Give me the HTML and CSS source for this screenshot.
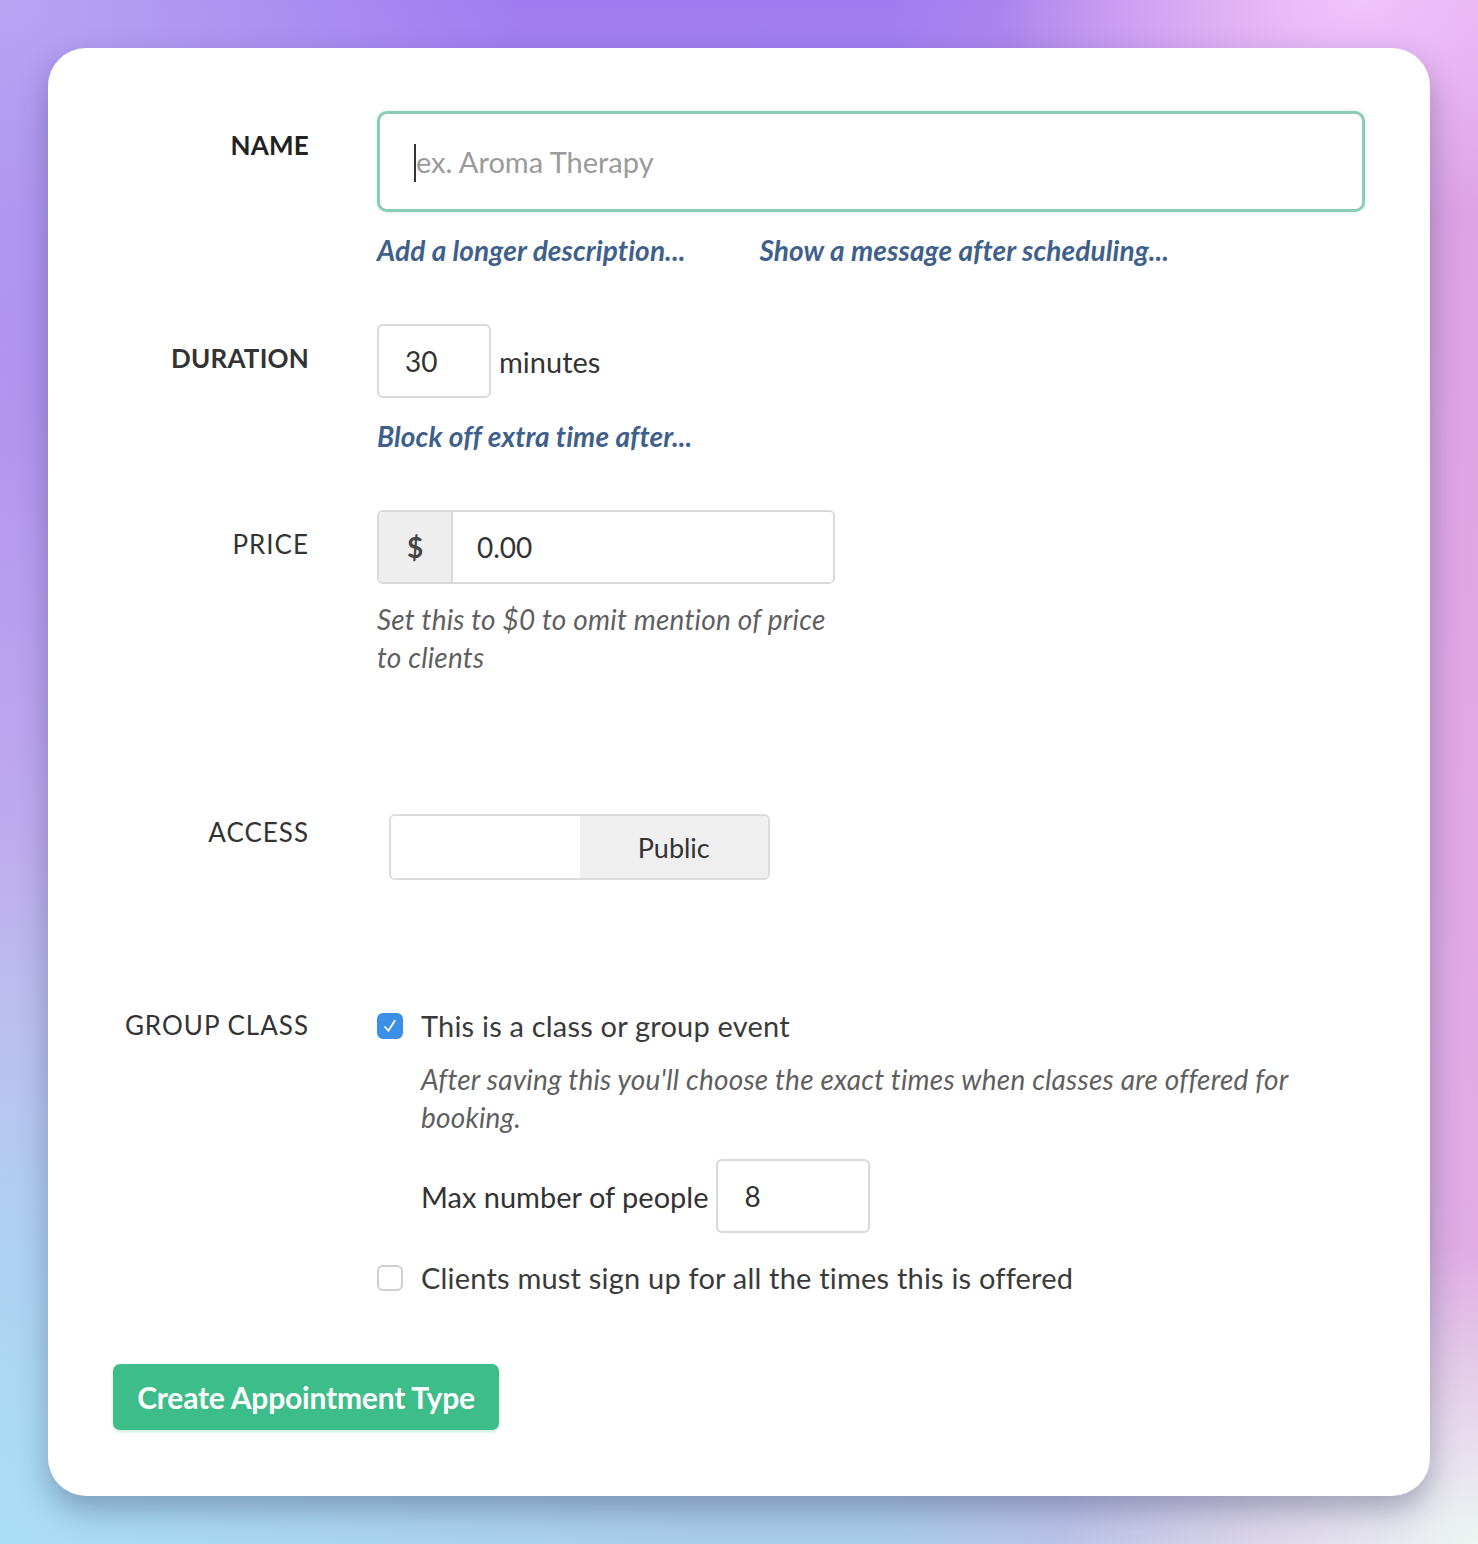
FILE: index.html
```html
<!DOCTYPE html>
<html lang="en">
<head>
<meta charset="utf-8">
<title>New Appointment Type</title>
<link rel="stylesheet" href="styles.css">
</head>
<body>
<div class="card">
  <div class="form">
    <div class="label label-strong">NAME</div>
    <div class="field">
      <div class="name-wrap">
        <input class="name-input" type="text" placeholder="ex. Aroma Therapy">
        <span class="caret"></span>
      </div>
      <div class="links">
        <a class="link" href="#">Add a longer description...</a>
        <a class="link" href="#">Show a message after scheduling...</a>
      </div>
    </div>

    <div class="label label-semi row-gap">DURATION</div>
    <div class="field row-gap">
      <div class="inline">
        <input class="box duration-input" type="text" value="30">
        <span class="unit">minutes</span>
      </div>
      <div class="links"><a class="link" href="#">Block off extra time after...</a></div>
    </div>

    <div class="label row-gap">PRICE</div>
    <div class="field row-gap">
      <div class="price-group">
        <span class="addon">$</span>
        <input class="price-input" type="text" value="0.00">
      </div>
      <p class="help help-price">Set this to $0 to omit mention of price to clients</p>
    </div>

    <div class="label row-gap-lg">ACCESS</div>
    <div class="field row-gap-lg access-field">
      <div class="toggle">
        <span class="toggle-off"></span>
        <span class="toggle-on">Public</span>
      </div>
    </div>

    <div class="label row-gap-xl">GROUP CLASS</div>
    <div class="field row-gap-xl group-field">
      <label class="check-line">
        <span class="check checked">
          <svg viewBox="0 0 16 16" width="20" height="20"><path d="M4 8.8 L6.7 11.8 L11.8 3.8" fill="none" stroke="#fff" stroke-width="1.4" stroke-linecap="round" stroke-linejoin="round"/></svg>
        </span>
        <span class="check-text">This is a class or group event</span>
      </label>
      <div class="indent">
        <p class="help help-group">After saving this you'll choose the exact times when classes are offered for booking.</p>
        <div class="inline max-line">
          <span class="max-label">Max number of people</span>
          <input class="box max-input" type="text" value="8">
        </div>
      </div>
      <label class="check-line check-line-2">
        <span class="check"></span>
        <span class="check-text">Clients must sign up for all the times this is offered</span>
      </label>
    </div>
  </div>
  <button class="submit" type="button">Create Appointment Type</button>
</div>
</body>
</html>
```
FILE: styles.css
```css
* { box-sizing: border-box; }

html, body {
  margin: 0;
  padding: 0;
}

body {
  width: 1478px;
  height: 1544px;
  padding: 48px;
  font-family: Lato, "Open Sans", "Liberation Sans", sans-serif;
  color: #3a3a3a;
  background:
    radial-gradient(ellipse 420px 300px at 100% 100%, rgba(236,246,242,1) 0%, rgba(236,246,242,0) 100%),
    radial-gradient(ellipse 700px 700px at 0% 100%, rgba(170,222,246,1) 0%, rgba(170,222,246,0) 100%),
    radial-gradient(ellipse 360px 220px at 92% 0%, rgba(240,196,252,1) 0%, rgba(240,196,252,0) 100%),
    radial-gradient(ellipse 520px 420px at 0% 0%, rgba(186,170,244,0.9) 0%, rgba(186,170,244,0) 100%),
    linear-gradient(to right, rgba(190,170,245,0) 60%, rgba(232,168,226,0.85) 100%),
    linear-gradient(to bottom, #a07cf0 0%, #b79cef 35%, #c2b4ee 65%, #aacde9 100%);
  overflow: hidden;
}

.card {
  width: 1382px;
  height: 1448px;
  background: #fff;
  border-radius: 38px;
  padding: 63px 65px 67px;
  box-shadow: 0 14px 30px rgba(40, 50, 90, 0.35);
}

.form {
  display: grid;
  grid-template-columns: 196px 988px;
  column-gap: 68px;
  align-items: start;
}

.label {
  text-align: right;
  font-size: 26px;
  line-height: 34px;
  padding-top: 17px;
  font-weight: 400;
  color: #333;
  letter-spacing: 1px;
}
.label-strong { font-weight: 700; color: #222; letter-spacing: 0.2px; }
.label-semi { font-weight: 700; color: #333; letter-spacing: 0.2px; }

.row-gap { margin-top: 57px; }
.row-gap-lg { margin-top: 122px; }
.row-gap-xl { margin-top: 111px; }

.field { min-width: 0; }

.name-wrap {
  position: relative;
  height: 101px;
}
.name-input {
  width: 100%;
  height: 101px;
  border: 3px solid #8ccbb8;
  border-radius: 10px;
  padding: 0 0 0 36px;
  font-family: inherit;
  font-size: 29px;
  color: #333;
  outline: none;
  background: #fff;
  box-shadow: 0 0 4px rgba(120, 200, 170, 0.35);
}
.name-input::placeholder { color: #9a9a9a; }
.caret {
  position: absolute;
  left: 37px;
  top: 33px;
  width: 2px;
  height: 38px;
  background: #333;
}

.links {
  margin-top: 21px;
  display: flex;
  gap: 74px;
  line-height: 34px;
}
.link {
  font-size: 28px;
  font-style: italic;
  font-weight: 700;
  color: #3f5f8c;
  text-decoration: none;
  letter-spacing: 0.1px;
}

.inline {
  display: flex;
  align-items: center;
}

.box {
  height: 74px;
  border: 2px solid #d9d9d9;
  border-radius: 6px;
  font-family: inherit;
  font-size: 28px;
  color: #333;
  background: #fff;
  outline: none;
}
.duration-input {
  width: 114px;
  padding: 0 0 0 26px;
}
.unit {
  margin-left: 8px;
  font-size: 29px;
  color: #333;
}

.price-group {
  display: flex;
  width: 458px;
  height: 74px;
  border: 2px solid #d9d9d9;
  border-radius: 6px;
  overflow: hidden;
}
.addon {
  width: 74px;
  background: #eeeeee;
  border-right: 2px solid #d9d9d9;
  display: flex;
  align-items: center;
  justify-content: center;
  font-size: 28px;
  font-weight: 700;
  color: #444;
}
.price-input {
  flex: 1;
  border: 0;
  padding: 0 0 0 24px;
  font-family: inherit;
  font-size: 28px;
  color: #333;
  outline: none;
  min-width: 0;
}

.help {
  margin: 0;
  font-size: 28px;
  line-height: 38px;
  font-style: italic;
  color: #5f5f5f;
  letter-spacing: 0.2px;
}
.help-price {
  margin-top: 16px;
  width: 470px;
}

.access-field { padding-top: 16px; }
.toggle {
  margin-left: 12px;
  width: 381px;
  height: 66px;
  display: flex;
  border: 2px solid #dcdcdc;
  border-radius: 6px;
  overflow: hidden;
}
.toggle-off {
  flex: 1;
  background: #fff;
}
.toggle-on {
  flex: 1;
  background: #efefef;
  display: flex;
  align-items: center;
  justify-content: center;
  font-size: 27px;
  color: #333;
}

.group-field { padding-top: 16px; }
.check-line {
  display: flex;
  align-items: center;
  line-height: 38px;
}
.check {
  width: 26px;
  height: 26px;
  border: 2px solid #cfcfcf;
  border-radius: 6px;
  background: #fff;
  display: flex;
  align-items: center;
  justify-content: center;
  flex: none;
}
.check.checked {
  background: #3b8fe6;
  border-color: #3b8fe6;
}
.check-text {
  margin-left: 18px;
  font-size: 29px;
  letter-spacing: 0.2px;
  color: #3a3a3a;
}
.indent {
  padding-left: 44px;
}
.help-group {
  margin-top: 15px;
  width: 900px;
}
.max-line {
  margin-top: 23px;
}
.max-label {
  font-size: 29px;
  color: #333;
  margin-right: 7px;
}
.max-input {
  width: 154px;
  height: 74px;
  padding: 0 0 0 27px;
}
.check-line-2 {
  margin-top: 26px;
}

.submit {
  display: block;
  margin-top: 67px;
  width: 386px;
  height: 66px;
  border: 0;
  border-radius: 7px;
  background: #3dbd89;
  color: #fff;
  font-family: inherit;
  font-size: 30px;
  font-weight: 700;
  letter-spacing: -0.2px;
  cursor: pointer;
  box-shadow: 0 2px 3px rgba(60, 180, 130, 0.25);
}
```
